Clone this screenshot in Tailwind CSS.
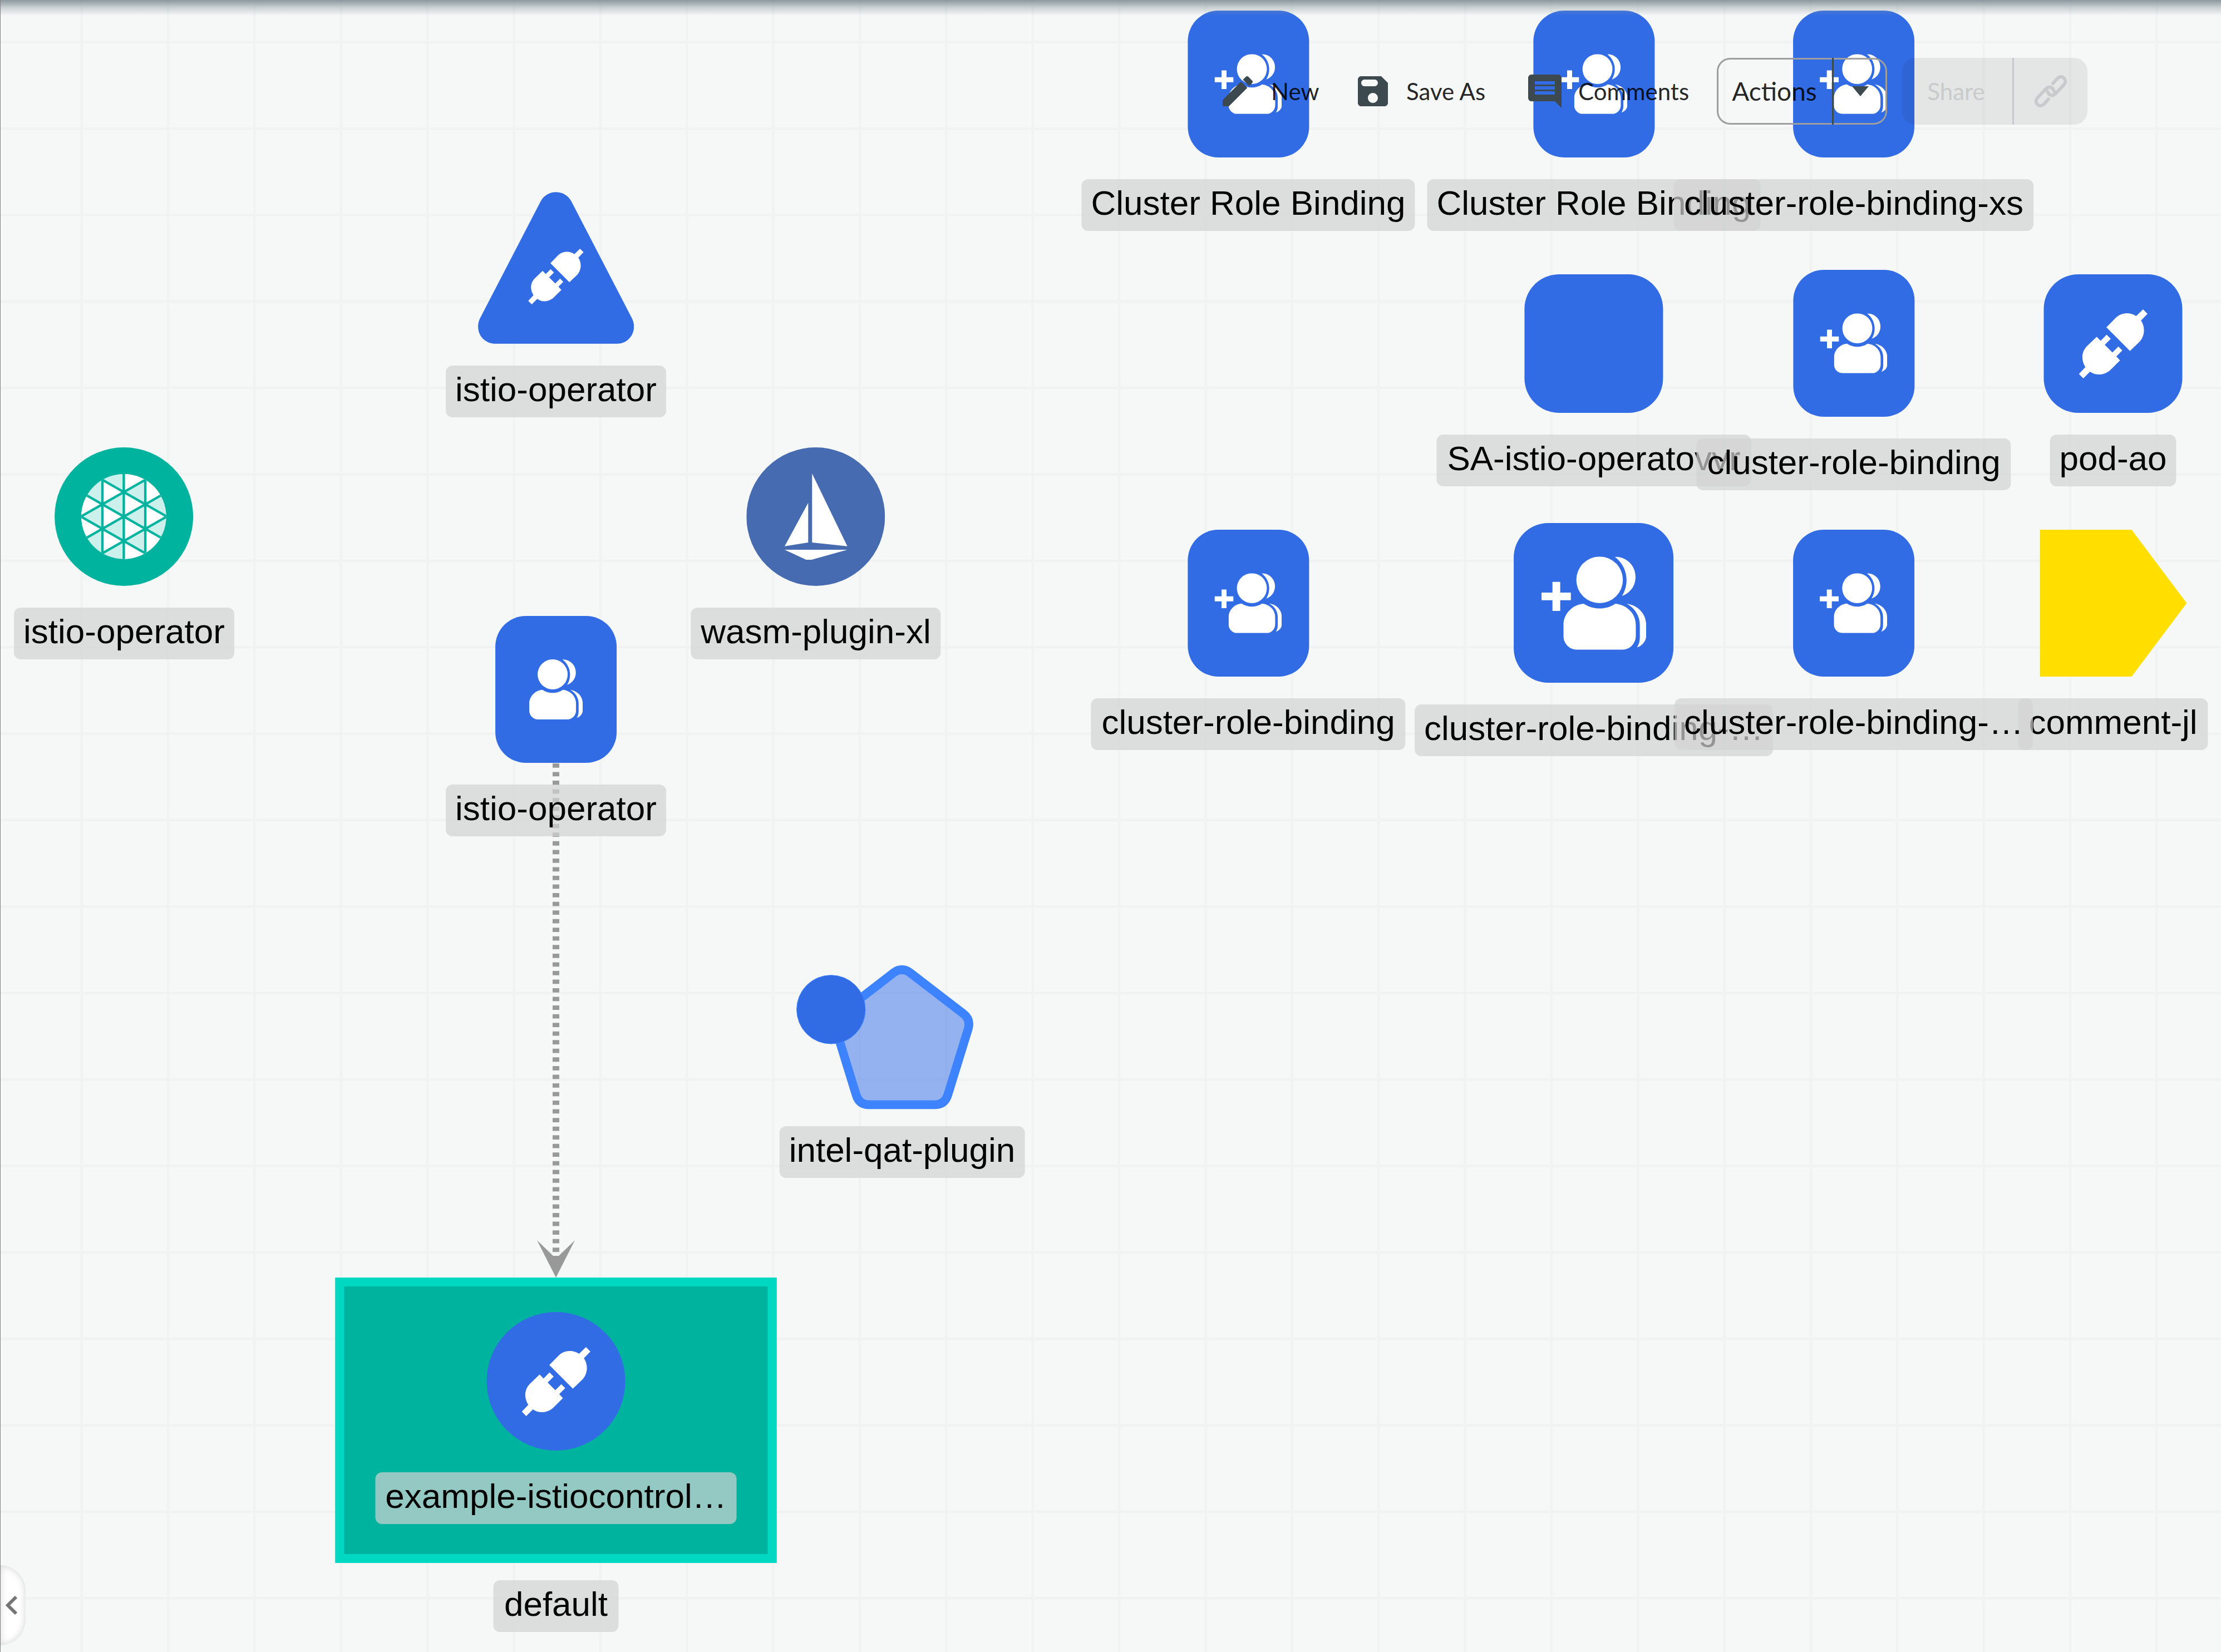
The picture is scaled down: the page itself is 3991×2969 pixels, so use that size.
<!DOCTYPE html>
<html lang="en">
<head>
<meta charset="utf-8">
<meta name="viewport" content="width=device-width, initial-scale=1">
<title>Design canvas</title>
<script src="https://cdn.jsdelivr.net/npm/@tailwindcss/browser@4"></script>
</head>
<body class="bg-[#f6f8f8]">

<!-- Shared icon shapes -->
<svg class="hidden" aria-hidden="true">
  <symbol id="plug" viewBox="0 0 298 299">
    <path d="M119 78 157 39C181 14 218 9 248 29L278 0 297 19 269 48C289 78 285 117 262 141L221 180Z"/>
    <path d="M77 119 94 136 120 110 138 128 112 154 145 187 171 161 188 178 162 204 178 221 138 261C114 285 77 290 48 270L19 299 0 280 28 250C9 221 10 184 35 159Z"/>
  </symbol>
  <symbol id="users" viewBox="0 0 288 324">
    <circle cx="126" cy="81" r="81"/>
    <path d="M179 1C218-1 251 30 251 71 251 101 233 127 204 137 232 92 222 33 179 1Z"/>
    <path d="M71 164C104 186 148 186 181 164 221 168 252 198 252 238V276A47 48 0 0 1 205 324H47A47 48 0 0 1 0 276V238C0 200 32 166 71 164Z"/>
    <path d="M221 164C261 170 288 200 288 238V276C288 292 276 310 256 316 263 305 266 295 266 280V238C266 208 250 180 221 164Z"/>
  </symbol>
  <symbol id="add-users" viewBox="0 0 364 324">
    <path d="M38 88h27v37h37v27H65v37H38v-37H0v-27h38Z"/>
    <use href="#users" x="76" y="0" width="288" height="324"/>
  </symbol>
</svg>

<main class="relative min-h-screen w-full overflow-hidden border-l border-[#808080] bg-[#f6f8f8] font-['Liberation_Sans',Arial,sans-serif] text-[62px] leading-[70px] text-black">

  <!-- Grid and edges -->
  <svg class="absolute inset-0 size-full" aria-hidden="true">
    <defs>
      <pattern id="grid" width="50" height="50" patternUnits="userSpaceOnUse" patternTransform="translate(-12 -82) scale(3.1073)">
        <path d="M.75 0V50M0 .75H50" fill="none" stroke="#f1f3f3" stroke-width="1.5"/>
      </pattern>
    </defs>
    <rect width="100%" height="100%" fill="url(#grid)"/>
    <path d="M998 1372V2250" stroke="#999" stroke-width="12" stroke-dasharray="7.77 7.77"/>
    <path d="M964 2229 993 2257H1003L1032 2229 998 2296Z" fill="#999"/>
  </svg>

  <!-- Nodes -->
  <div class="absolute left-[998px] top-[345px] flex -translate-x-1/2 flex-col items-center gap-[39px] whitespace-nowrap">
    <div class="grid">
      <svg class="col-start-1 row-start-1 h-[273px] w-[280px] fill-[#326ce5]" viewBox="0 0 841 818"><path d="M337 51C355 17 387 0 420 0 454 0 486 17 504 51L830 680C838 695 841 710 841 727 841 777 801 818 751 818H90C40 818 0 777 0 727 0 710 3 695 11 680Z"/></svg>
      <svg class="col-start-1 row-start-1 mt-[102px] size-[100px] justify-self-center fill-white"><use href="#plug"/></svg>
    </div>
    <span class="rounded-xl bg-[#d2d3d1]/70 px-[17px] pt-2 pb-[15px]">istio-operator</span>
  </div>

  <div class="absolute left-[222px] top-[804px] flex -translate-x-1/2 flex-col items-center gap-[39px] whitespace-nowrap">
    <svg class="size-[249px]" viewBox="294 72 747 747">
      <defs><clipPath id="disk"><circle cx="667" cy="445" r="229"/></clipPath></defs>
      <circle cx="667.5" cy="445.5" r="373.5" fill="#00b39f"/>
      <g clip-path="url(#disk)">
        <path d="M400 200H940V700H400Z" fill="#ccf0eb"/>
        <path fill="#fff" d="M552 379 436 313V445ZM552 511 436 445V577ZM667 313 552 247V379ZM667 445 552 379V511ZM667 577 552 511V643ZM783 247 667 181V313ZM783 379 667 313V445ZM783 511 667 445V577ZM783 643 667 577V709ZM899 313 783 247V379ZM899 445 783 379V511ZM899 577 783 511V643Z"/>
        <path fill="none" stroke="#00b39f" stroke-width="13" d="M552 200V700M667 200V700M783 200V700M436 181 899 445M436 313 899 577M436 445 899 709M436 445 899 181M436 577 899 313M436 709 899 445"/>
      </g>
    </svg>
    <span class="rounded-xl bg-[#d2d3d1]/70 px-[17px] pt-2 pb-[15px]">istio-operator</span>
  </div>

  <div class="absolute left-[1465px] top-[804px] flex -translate-x-1/2 flex-col items-center gap-[39px] whitespace-nowrap">
    <svg class="size-[249px]" viewBox="424 72 747 747">
      <circle cx="797.5" cy="445.5" r="373.5" fill="#466bb0"/>
      <path fill="#fff" d="M778 213 968 605 778 585ZM757 371V585L630 605ZM630 624H968L775 678H746Z"/>
    </svg>
    <span class="rounded-xl bg-[#d2d3d1]/70 px-[18px] pt-2 pb-[15px]">wasm-plugin-xl</span>
  </div>

  <div class="absolute left-[998px] top-[1107px] flex -translate-x-1/2 flex-col items-center gap-[39px] whitespace-nowrap">
    <div class="grid h-[264px] w-[218px] place-items-center rounded-[55px] bg-[#326ce5]"><svg class="h-[108px] w-[96px] fill-white"><use href="#users"/></svg></div>
    <span class="rounded-xl bg-[#d2d3d1]/70 px-[17px] pt-2 pb-[15px]">istio-operator</span>
  </div>

  <div class="absolute left-[1620px] top-[1735px] flex -translate-x-1/2 flex-col items-center gap-[31px] whitespace-nowrap">
    <svg class="h-[258px] w-[256px] overflow-visible" viewBox="339 104 768 774">
      <path d="M681 142Q723 113 765 142L1055 365Q1094 395 1081 444L970 804Q953 855 903 855H545Q493 855 477 804L366 444Q353 395 392 365Z" fill="#326ce5" fill-opacity=".5" stroke="#3d82ff" stroke-width="47"/>
      <circle cx="341" cy="342" r="185" fill="#326ce5" stroke="#3d82ff" stroke-width="3"/>
    </svg>
    <span class="rounded-xl bg-[#d2d3d1]/70 px-[17px] pt-2 pb-[15px]">intel-qat-plugin</span>
  </div>

  <!-- Namespace group -->
  <div class="absolute left-[998px] top-[2296px] flex -translate-x-1/2 flex-col items-center gap-[31px] whitespace-nowrap">
    <div class="flex w-[793px] flex-col items-center gap-[39px] border-16 border-[#00d8c2] bg-[#00b39f] pt-[46px] pb-[54px]">
      <div class="grid size-[249px] place-items-center rounded-full bg-[#326ce5]"><svg class="size-[124px] fill-white"><use href="#plug"/></svg></div>
      <span class="rounded-xl bg-[#d2d3d1]/70 px-[18px] pt-2 pb-[15px]">example-istiocontrol…</span>
    </div>
    <span class="rounded-xl bg-[#d2d3d1]/70 px-[19px] pt-2 pb-[15px]">default</span>
  </div>

  <!-- First row -->
  <div class="absolute left-[2242px] top-[19px] flex -translate-x-1/2 flex-col items-center gap-[39px] whitespace-nowrap">
    <div class="grid h-[264px] w-[218px] place-items-center rounded-[55px] bg-[#326ce5]"><svg class="h-[108px] w-[121px] fill-white"><use href="#add-users"/></svg></div>
    <span class="rounded-xl bg-[#d2d3d1]/70 px-[17px] pt-2 pb-[15px]">Cluster Role Binding</span>
  </div>
  <div class="absolute left-[2863px] top-[19px] flex -translate-x-1/2 flex-col items-center gap-[39px] whitespace-nowrap">
    <div class="grid h-[264px] w-[218px] place-items-center rounded-[55px] bg-[#326ce5]"><svg class="h-[108px] w-[121px] fill-white"><use href="#add-users"/></svg></div>
    <span class="rounded-xl bg-[#d2d3d1]/70 px-[17px] pt-2 pb-[15px]">Cluster Role Binding</span>
  </div>
  <div class="absolute left-[3330px] top-[19px] flex -translate-x-1/2 flex-col items-center gap-[39px] whitespace-nowrap">
    <div class="grid h-[264px] w-[218px] place-items-center rounded-[55px] bg-[#326ce5]"><svg class="h-[108px] w-[121px] fill-white"><use href="#add-users"/></svg></div>
    <span class="rounded-xl bg-[#d2d3d1]/70 px-[18px] pt-2 pb-[15px]">cluster-role-binding-xs</span>
  </div>

  <!-- Second row -->
  <div class="absolute left-[2863px] top-[493px] flex -translate-x-1/2 flex-col items-center gap-[39px] whitespace-nowrap">
    <div class="size-[249px] rounded-[62px] bg-[#326ce5]"></div>
    <span class="rounded-xl bg-[#d2d3d1]/70 px-[19px] pt-2 pb-[15px]">SA-istio-operatovvr</span>
  </div>
  <div class="absolute left-[3330px] top-[485px] flex -translate-x-1/2 flex-col items-center gap-[39px] whitespace-nowrap">
    <div class="grid h-[264px] w-[218px] place-items-center rounded-[55px] bg-[#326ce5]"><svg class="h-[108px] w-[121px] fill-white"><use href="#add-users"/></svg></div>
    <span class="rounded-xl bg-[#d2d3d1]/70 px-[19px] pt-2 pb-[15px]">cluster-role-binding</span>
  </div>
  <div class="absolute left-[3796px] top-[493px] flex -translate-x-1/2 flex-col items-center gap-[39px] whitespace-nowrap">
    <div class="grid size-[249px] place-items-center rounded-[62px] bg-[#326ce5]"><svg class="size-[124px] fill-white"><use href="#plug"/></svg></div>
    <span class="rounded-xl bg-[#d2d3d1]/70 px-[17px] pt-2 pb-[15px]">pod-ao</span>
  </div>

  <!-- Third row -->
  <div class="absolute left-[2242px] top-[952px] flex -translate-x-1/2 flex-col items-center gap-[39px] whitespace-nowrap">
    <div class="grid h-[264px] w-[218px] place-items-center rounded-[55px] bg-[#326ce5]"><svg class="h-[108px] w-[121px] fill-white"><use href="#add-users"/></svg></div>
    <span class="rounded-xl bg-[#d2d3d1]/70 px-[19px] pt-2 pb-[15px]">cluster-role-binding</span>
  </div>
  <div class="absolute left-[2863px] top-[940px] flex -translate-x-1/2 flex-col items-center gap-[39px] whitespace-nowrap">
    <div class="grid size-[287px] place-items-center rounded-[62px] bg-[#326ce5]"><svg class="h-[168px] w-[188px] fill-white"><use href="#add-users"/></svg></div>
    <span class="rounded-xl bg-[#d2d3d1]/70 px-[17px] pt-2 pb-[15px]">cluster-role-binding-…</span>
  </div>
  <div class="absolute left-[3796px] top-[952px] flex -translate-x-1/2 flex-col items-center gap-[39px] whitespace-nowrap">
    <svg class="size-[264px] fill-[#ffde00]" viewBox="0 0 264 264"><path d="M0 0H165L264 132 165 264H0Z"/></svg>
    <span class="rounded-xl bg-[#d2d3d1]/70 px-[19px] pt-2 pb-[15px]">comment-jl</span>
  </div>
  <div class="absolute left-[3330px] top-[952px] flex -translate-x-1/2 flex-col items-center gap-[39px] whitespace-nowrap">
    <div class="grid h-[264px] w-[218px] place-items-center rounded-[55px] bg-[#326ce5]"><svg class="h-[108px] w-[121px] fill-white"><use href="#add-users"/></svg></div>
    <span class="rounded-xl bg-[#d2d3d1]/70 px-[17px] pt-2 pb-[15px]">cluster-role-binding-…</span>
  </div>

  <!-- Toolbar floating over the canvas -->
  <div class="absolute inset-x-0 top-0 h-7 bg-linear-to-b from-[#8a989d] via-[#8a989d]/40 via-50% to-transparent"></div>
  <header class="relative flex h-[328px] items-center justify-end pr-60 font-['Lato',sans-serif] text-[42px] leading-[56px] text-black/87">
    <button type="button" class="flex w-[243px] items-center gap-6">
      <svg class="size-[72px] fill-[#3c494f]" viewBox="0 0 24 24" aria-hidden="true"><path d="M3 17.25V21h3.75L17.81 9.94l-3.75-3.75L3 17.25zM20.71 7.04c.39-.39.39-1.02 0-1.41l-2.34-2.34c-.39-.39-1.02-.39-1.41 0l-1.83 1.83 3.75 3.75 1.83-1.83z"/></svg>
      New
    </button>
    <button type="button" class="flex w-[309px] items-center gap-6">
      <svg class="size-[72px] fill-[#3c494f]" viewBox="0 0 24 24" aria-hidden="true"><path d="M17 3H5c-1.11 0-2 .9-2 2v14c0 1.1.89 2 2 2h14c1.1 0 2-.9 2-2V7l-4-4zM12 19c-1.66 0-3-1.34-3-3s1.34-3 3-3 3 1.34 3 3-1.34 3-3 3zm1-10H7c-1.1 0-2-.9-2-2s.9-2 2-2h6c1.1 0 2 .9 2 2s-.9 2-2 2z"/></svg>
      Save As
    </button>
    <button type="button" class="flex w-[345px] items-center gap-6">
      <svg class="size-[72px] fill-[#3c494f]" viewBox="0 0 24 24" aria-hidden="true"><path d="M21.99 4c0-1.1-.89-2-1.99-2H4c-1.1 0-2 .9-2 2v12c0 1.1.9 2 2 2h14l4 4-.01-18zM18 14H6v-2h12v2zm0-3H6V9h12v2zm0-3H6V6h12v2z"/></svg>
      Comments
    </button>
    <div class="relative mr-[27px] flex h-[120px] w-[306px]">
      <div class="pointer-events-none absolute inset-0 rounded-3xl border-3 border-[#9e9e9e]"></div>
      <button type="button" class="relative w-[210px] border-r-3 border-[#3c494f] text-[46px]">Actions</button>
      <button type="button" aria-label="More actions" class="relative grid flex-1 place-items-center"><svg class="size-[72px] fill-[#3c494f]" viewBox="0 0 24 24" aria-hidden="true"><path d="M7 9h10L12 15z"/></svg></button>
    </div>
    <div class="flex h-[120px] w-[333px] rounded-3xl bg-black/7 text-[#c8cacb]">
      <button type="button" disabled class="w-[201px] border-r-3 border-[#c8cacb] pr-1">Share</button>
      <button type="button" disabled aria-label="Copy link" class="grid flex-1 place-items-center"><svg class="size-[60px] overflow-visible fill-none stroke-current stroke-6" viewBox="0 0 60 60" stroke-linecap="round" stroke-linejoin="round" aria-hidden="true"><path d="M34 16 42 7C50-1 61 9 54 18L38 35C33 40 26 37 24 30"/><path d="M26 44 18 53C10 61-1 51 6 42L22 25C27 20 34 23 36 30"/></svg></button>
    </div>
  </header>

  <!-- Side panel handle -->
  <button type="button" aria-label="Collapse panel" class="absolute bottom-3 -left-px grid h-[144px] w-[46px] place-items-center rounded-r-[46px] bg-white pr-1 shadow-[inset_0_0_14px_rgba(0,0,0,0.18)]">
    <svg class="h-9 w-[22px]" viewBox="0 0 22 36" aria-hidden="true"><path d="M19 3 4 18 19 33" fill="none" stroke="#757575" stroke-width="6"/></svg>
  </button>
</main>
</body>
</html>
